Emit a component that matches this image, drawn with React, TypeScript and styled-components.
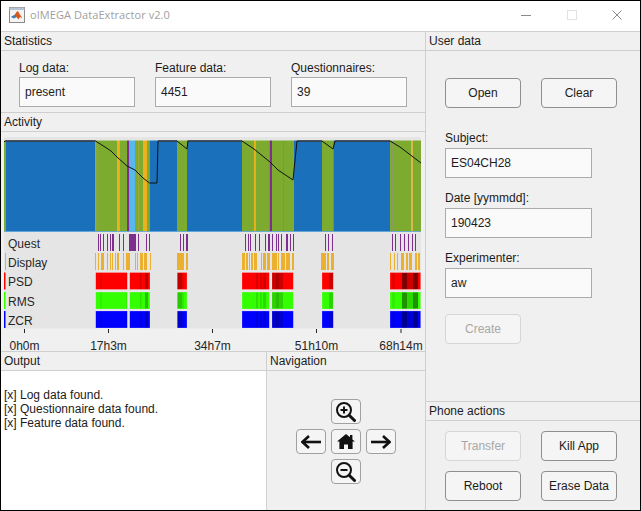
import styled, { createGlobalStyle } from 'styled-components'

// every x below is in window pixels, the svg viewBox starts at (1, 132)
type Span = [number, number]
type Stripe = [number, number, number]

const BLUE = '#1a70ba'
const GREEN = '#7dab30'
const ORANGE = '#edb120'
const PURPLE = '#7e2f8e'
const SKY = '#58b8ec'

const activity: [number, number, string][] = [
  [4, 6, GREEN], [6, 95.5, BLUE], [95.5, 98, '#8aa83a'], [98, 117, GREEN], [117, 119.5, ORANGE],
  [119.5, 127, GREEN], [127, 129.5, PURPLE], [129.5, 135, SKY], [135, 138, GREEN], [138, 139, '#a0a83a'],
  [139, 143, GREEN], [143, 147, ORANGE], [147, 149.5, GREEN], [149.5, 177, BLUE], [177, 187, GREEN],
  [187, 242, BLUE], [242, 254, GREEN], [254, 255.5, ORANGE], [255.5, 269.5, GREEN], [269.5, 272, PURPLE],
  [272, 283, GREEN], [283, 284, '#8c8f55'], [284, 293.6, GREEN], [293.6, 322, BLUE], [322, 333.3, GREEN],
  [333.3, 390, BLUE], [390, 392, GREEN], [392, 393, '#8c9a60'], [393, 411.5, GREEN], [411.5, 412.8, ORANGE],
  [412.8, 421, GREEN],
]

const batteryLine =
  '4,142 5,141 95.5,141 105,147 111,151 117,157 127,166 135,170 143,178 149.5,183 157,183 158,141 177,141 187,149 188,141 242,141 254,149 270,162 278,170 293,180 297,141 322,141 333,149 335,141 390,141 400,147 421,163'

const questMarks: Span[] = [
  [97.6, 98.4], [100.3, 101.1], [103, 103.8], [107, 107.8], [110, 110.8], [111.7, 112.5], [113.4, 114.2],
  [119, 119.8], [123, 123.8], [129, 136], [138, 138.8], [145.7, 146.5], [148.7, 149.5], [179.7, 180.5],
  [182.7, 183.5], [185.7, 187.7], [245, 245.8], [247.7, 248.5], [250.4, 251.2], [255, 256], [258.7, 259.5],
  [265.3, 266.7], [268.3, 270], [272, 272.8], [276, 276.8], [278.4, 279.2], [280.7, 281.5], [286.3, 288.3],
  [289.7, 290.5], [293, 293.8], [325, 325.8], [327.7, 328.5], [332, 332.8], [392, 392.8], [395.4, 396.2],
  [400.4, 401.2], [404, 404.8], [408, 408.8], [412, 412.8], [415, 415.8],
]

const displayMarks: Span[] = [
  [95.3, 96], [98.3, 99.3], [101.3, 104.7], [107.3, 108], [110, 110.7], [112.3, 113.3], [115, 115.7],
  [117, 118.7], [122.7, 124], [126, 130.3], [135, 136], [137.3, 138.7], [140, 142.7], [144, 147.3],
  [149.7, 150.3], [177.3, 184], [185.7, 187.7], [242.3, 245], [246, 247.7], [248.7, 249.3], [250.7, 252.3],
  [254, 257], [260.7, 262], [263.3, 266], [267.3, 270], [272, 276.7], [278.3, 279], [280.7, 284.3],
  [285.7, 290], [291.7, 293.3], [321, 325.7], [327, 329.3], [330.7, 334], [390.3, 391.7], [394, 395.3],
  [397.3, 398.7], [401, 404.3], [405.7, 407.3], [409.3, 412.7], [415, 416.7], [418.3, 420.7],
]

const blocks: Span[] = [
  [95.7, 127.3], [129.7, 150], [177.3, 187], [242, 269.3], [272, 293.3], [322, 333.3], [390, 420.7],
]

const stripes: Stripe[] = [
  [100, 102, 0.08], [126, 127.3, 0.06], [140, 141.5, 0.14], [145, 148, 0.28], [177.3, 182, 0.25], [182, 184, 0.1],
  [256, 258, 0.14], [260, 262, 0.14], [263, 266, 0.18], [272, 276, 0.2], [276, 279, 0.3], [279, 283, 0.2], [329, 333, 0.2],
  [392, 395, 0.08], [402, 407, 0.5], [407, 413, 0.18], [413, 418, 0.5],
]

const channels = [
  { name: 'PSD', color: '#ff0000', y: 272.5, fade: 1 },
  { name: 'RMS', color: '#33ff00', y: 292, fade: 0.85 },
  { name: 'ZCR', color: '#0000ff', y: 311, fade: 0.9 },
]

const ticks = [
  { x: 24, label: '0h0m' },
  { x: 108, label: '17h3m' },
  { x: 212, label: '34h7m' },
  { x: 316, label: '51h10m' },
  { x: 400.5, label: '68h14m' },
]

function MarkRow({ marks, y, fill }: { marks: Span[]; y: number; fill: string }) {
  // thin marks stay one solid pixel, as in the plot
  return (
    <g shapeRendering="crispEdges">
      {marks.map(([a, b]) => (
        <rect key={a} x={Math.round(a)} y={y} width={Math.max(1, Math.round(b - a))} height={17} fill={fill} />
      ))}
    </g>
  )
}

function ActivityChart() {
  return (
    <ChartSvg viewBox="1 132 424 222" width={424} height={222}>
      <rect x={4} y={137} width={417} height={191.5} fill="#e5e5e5" />
      {activity.map(([a, b, fill]) => (
        <rect key={a} x={a} y={140.5} width={b - a} height={91} fill={fill} />
      ))}
      <rect x={4} y={231} width={417} height={1} fill="#5aa5dc" opacity={0.8} />
      <polyline points={batteryLine} fill="none" stroke="#111" strokeWidth={1} />
      <rect x={6} y={140.5} width={89.5} height={1} fill="#4a4a4a" />
      <rect x={158} y={140.5} width={19} height={1} fill="#4a4a4a" />
      <rect x={188} y={140.5} width={54} height={1} fill="#4a4a4a" />
      <rect x={298} y={140.5} width={24} height={1} fill="#4a4a4a" />
      <rect x={336} y={140.5} width={54} height={1} fill="#4a4a4a" />

      <MarkRow marks={questMarks} y={234} fill={PURPLE} />
      <MarkRow marks={displayMarks} y={253} fill="#ebb030" />
      {channels.map((c) => (
        <g key={c.name}>
          <rect x={4} y={c.y} width={1.5} height={17} fill={c.color} />
          {blocks.map(([a, b]) => (
            <rect key={a} x={a} y={c.y} width={b - a} height={17} fill={c.color} stroke="#fff" strokeOpacity={0.35} strokeWidth={0.6} />
          ))}
          {stripes.map(([a, b, o]) => (
            <rect key={a} x={a} y={c.y + 0.5} width={b - a} height={16} fill="#000" opacity={o * c.fade} />
          ))}
        </g>
      ))}
      <rect x={5} y={253} width={1} height={17} fill="#ebb030" />

      <ChartLabel x={8} y={247.5}>Quest</ChartLabel>
      <ChartLabel x={8} y={267}>Display</ChartLabel>
      <ChartLabel x={8} y={286}>PSD</ChartLabel>
      <ChartLabel x={8} y={305.5}>RMS</ChartLabel>
      <ChartLabel x={8} y={324.5}>ZCR</ChartLabel>

      {ticks.map((t) => (
        <g key={t.label}>
          <rect x={t.x} y={329} width={1} height={4} fill="#262626" />
          <ChartLabel x={t.x + 0.5} y={349.5} textAnchor="middle">{t.label}</ChartLabel>
        </g>
      ))}
    </ChartSvg>
  )
}

function MatlabLogo() {
  return (
    <svg width={16} height={16} viewBox="0 0 16 16">
      <rect x={0.5} y={0.5} width={15} height={15} fill="#f4f4f4" stroke="#8a8a8a" />
      <rect x={0.5} y={0.5} width={15} height={2.5} fill="#b8c4d4" />
      <path d="M2 10l3.5-2L7.5 5l1.5-1 1.5 3 3 4-2.5-1-1.5 2.5-2-2.5z" fill="#d9581c" />
      <path d="M2 10l3.5-2 2 2-2.5 1.5z" fill="#3a7cb8" />
    </svg>
  )
}

function ZoomIcon({ plus }: { plus: boolean }) {
  return (
    <svg width={20} height={20} viewBox="0 0 20 20" fill="none" stroke="#111">
      <circle cx={8} cy={8} r={7} strokeWidth={2} />
      <path d="M13.2 13.2l5.3 5.3" strokeWidth={3} strokeLinecap="round" />
      <path d="M4.5 8h7" strokeWidth={2} />
      {plus && <path d="M8 4.5v7" strokeWidth={2} />}
    </svg>
  )
}

function ArrowIcon({ right }: { right: boolean }) {
  return (
    <svg width={20} height={14} viewBox="0 0 20 14" fill="none" stroke="#111" strokeWidth={2.6}>
      <g transform={right ? undefined : 'matrix(-1 0 0 1 20 0)'}>
        <path d="M0 7h18" />
        <path d="M12 1l6.5 6-6.5 6" />
      </g>
    </svg>
  )
}

function HomeIcon() {
  return (
    <svg width={18} height={15} viewBox="0 0 18 15" fill="#111">
      <path d="M9 0L0 7.6h2.4V15h4.6v-4.6h4V15h4.6V7.6H18L15.4 5.4V1h-2.4v2.3z" />
    </svg>
  )
}

export default function App() {
  return (
    <Window>
      <GlobalStyle />
      <TitleBar>
        <MatlabLogo />
        <TitleText>oIMEGA DataExtractor v2.0</TitleText>
        <WindowControls>
          <svg width={10} height={10} viewBox="0 0 10 10"><path d="M0 5.5h10" stroke="#8a8a8a" /></svg>
          <svg width={10} height={10} viewBox="0 0 10 10"><rect x={0.5} y={0.5} width={9} height={9} fill="none" stroke="#e2e2e2" /></svg>
          <svg width={10} height={10} viewBox="0 0 10 10"><path d="M0.5 0.5l9 9M9.5 0.5l-9 9" stroke="#8a8a8a" /></svg>
        </WindowControls>
      </TitleBar>

      <Body>
        <LeftColumn>
          <PanelHeader>Statistics</PanelHeader>
          <StatsRow>
            <StatField>
              <FieldLabel>Log data:</FieldLabel>
              <ValueBox>present</ValueBox>
            </StatField>
            <StatField>
              <FieldLabel>Feature data:</FieldLabel>
              <ValueBox>4451</ValueBox>
            </StatField>
            <StatField>
              <FieldLabel>Questionnaires:</FieldLabel>
              <ValueBox>39</ValueBox>
            </StatField>
          </StatsRow>

          <PanelHeader $topLine>Activity</PanelHeader>
          <ActivityChart />

          <BottomRow>
            <OutputPanel>
              <PanelHeader $topLine>Output</PanelHeader>
              <OutputText>
                <div>[x] Log data found.</div>
                <div>[x] Questionnaire data found.</div>
                <div>[x] Feature data found.</div>
              </OutputText>
            </OutputPanel>
            <NavPanel>
              <PanelHeader $topLine>Navigation</PanelHeader>
              <NavGrid>
                <NavButton $cell={2}><ZoomIcon plus /></NavButton>
                <NavButton $cell={4}><ArrowIcon right={false} /></NavButton>
                <NavButton $cell={5}><HomeIcon /></NavButton>
                <NavButton $cell={6}><ArrowIcon right /></NavButton>
                <NavButton $cell={8}><ZoomIcon plus={false} /></NavButton>
              </NavGrid>
            </NavPanel>
          </BottomRow>
        </LeftColumn>

        <RightColumn>
          <PanelHeader>User data</PanelHeader>
          <UserData>
            <ButtonRow>
              <PushButton>Open</PushButton>
              <PushButton>Clear</PushButton>
            </ButtonRow>
            <UserField>
              <FieldLabel>Subject:</FieldLabel>
              <WideBox>ES04CH28</WideBox>
            </UserField>
            <UserField>
              <FieldLabel>Date [yymmdd]:</FieldLabel>
              <WideBox>190423</WideBox>
            </UserField>
            <UserField>
              <FieldLabel>Experimenter:</FieldLabel>
              <WideBox>aw</WideBox>
            </UserField>
            <CreateRow>
              <PushButton disabled>Create</PushButton>
            </CreateRow>
          </UserData>
          <PanelHeader $topLine>Phone actions</PanelHeader>
          <PhoneGrid>
            <PushButton disabled>Transfer</PushButton>
            <PushButton>Kill App</PushButton>
            <PushButton>Reboot</PushButton>
            <PushButton>Erase Data</PushButton>
          </PhoneGrid>
        </RightColumn>
      </Body>
    </Window>
  )
}

const GlobalStyle = createGlobalStyle`
  html, body {
    margin: 0;
    padding: 0;
    background: #f0f0f0;
  }
`

const Window = styled.div`
  width: 641px;
  height: 511px;
  box-sizing: border-box;
  border: 1px solid #000;
  display: flex;
  flex-direction: column;
  background: #f0f0f0;
  color: #1c1c1c;
  font-family: "Liberation Sans", Arial, sans-serif;
  font-size: 12px;
  overflow: hidden;
`

const TitleBar = styled.div`
  height: 27px;
  flex: none;
  display: flex;
  align-items: center;
  padding: 0 0 3px 8px;
  background: #fff;
  border-bottom: 1px solid #cfcfcf;
`

const TitleText = styled.span`
  margin-left: 5px;
  font-family: "Open Sans", sans-serif;
  font-size: 11px;
  letter-spacing: 0.07px;
  color: #a0a0a0;
`

const WindowControls = styled.div`
  margin-left: auto;
  margin-right: 18px;
  display: flex;
  gap: 35.5px;
`

const Body = styled.div`
  flex: 1;
  display: flex;
  min-height: 0;
`

const LeftColumn = styled.div`
  width: 424px;
  flex: none;
  display: flex;
  flex-direction: column;
  border-right: 1px solid #cfcfcf;
`

const RightColumn = styled.div`
  flex: 1;
  display: flex;
  flex-direction: column;
`

const PanelHeader = styled.div<{ $topLine?: boolean }>`
  height: 18px;
  flex: none;
  line-height: 18px;
  padding-left: 3px;
  border-bottom: 1px solid #cfcfcf;
  border-top: ${({ $topLine }) => ($topLine ? '1px solid #cfcfcf' : 'none')};
  white-space: nowrap;
`

const StatsRow = styled.div`
  height: 61px;
  flex: none;
  padding: 10px 0 0 18px;
  box-sizing: border-box;
  display: flex;
  gap: 20px;
`

const StatField = styled.div`
  width: 116px;
  display: flex;
  flex-direction: column;
`

const FieldLabel = styled.label`
  height: 15px;
  line-height: 14px;
  display: block;
  white-space: nowrap;
`

const ValueBox = styled.div`
  height: 30px;
  box-sizing: border-box;
  margin-top: 1px;
  padding-left: 5px;
  line-height: 28px;
  background: #fafafa;
  border: 1px solid #ababab;
`

const ChartSvg = styled.svg`
  display: block;
  flex: none;
  margin-bottom: -3px;
  font-family: "Liberation Sans", Arial, sans-serif;
`

const ChartLabel = styled.text`
  font-size: 12px;
  fill: #262626;
`

const BottomRow = styled.div`
  flex: 1;
  display: flex;
  min-height: 0;
`

const OutputPanel = styled.div`
  width: 265px;
  flex: none;
  display: flex;
  flex-direction: column;
  border-right: 1px solid #cfcfcf;
`

const OutputText = styled.div`
  flex: 1;
  background: #fff;
  padding: 17px 3px 0;
  line-height: 14px;
`

const NavPanel = styled.div`
  flex: 1;
  display: flex;
  flex-direction: column;
`

const NavGrid = styled.div`
  display: grid;
  grid-template-columns: repeat(3, 30px);
  grid-auto-rows: 25px;
  gap: 5px;
  justify-content: center;
  padding-top: 28px;
  margin-left: -1px;
`

const NavButton = styled.button<{ $cell: number }>`
  grid-column: ${({ $cell }) => (($cell - 1) % 3) + 1};
  grid-row: ${({ $cell }) => Math.floor(($cell - 1) / 3) + 1};
  padding: 0;
  display: flex;
  align-items: center;
  justify-content: center;
  background: #f5f5f5;
  border: 1px solid #a0a0a0;
  border-radius: 4px;
`

const UserData = styled.div`
  flex: 1;
  padding: 27px 0 0 19px;
  display: flex;
  flex-direction: column;
`

const ButtonRow = styled.div`
  display: flex;
  gap: 20px;
  margin-bottom: 24px;
`

const PushButton = styled.button`
  width: 76px;
  height: 30px;
  padding: 0;
  flex: none;
  font-family: inherit;
  font-size: 12px;
  color: ${({ disabled }) => (disabled ? '#a8a8a8' : '#1c1c1c')};
  background: #f5f5f5;
  border: 1px solid ${({ disabled }) => (disabled ? '#d6d6d6' : '#8f8f8f')};
  border-radius: 4px;
`

const UserField = styled.div`
  display: flex;
  flex-direction: column;
  margin-bottom: 14px;

  ${FieldLabel} {
    line-height: 12px;
  }
`

const WideBox = styled(ValueBox)`
  width: 147px;
`

const CreateRow = styled.div`
  margin-top: 2px;
`

const PhoneGrid = styled.div`
  flex: none;
  height: 89px;
  box-sizing: border-box;
  padding: 10px 0 0 19px;
  display: grid;
  grid-template-columns: 76px 76px;
  grid-auto-rows: 30px;
  column-gap: 20px;
  row-gap: 10px;
`
